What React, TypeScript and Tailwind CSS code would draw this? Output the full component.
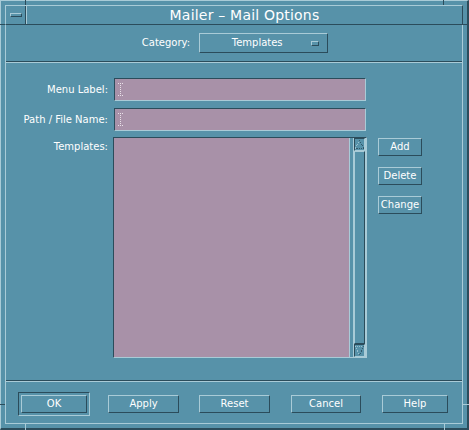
import React from 'react';

// Motif / CDE palette
// bg #5792a9, light #a9cbd7, dark #2b4c5b, field #a891a8
const raised =
  'border border-t-[#a9cbd7] border-l-[#a9cbd7] border-r-[#2b4c5b] border-b-[#2b4c5b]';
const sunken =
  'border border-t-[#2b4c5b] border-l-[#2b4c5b] border-r-[#a9cbd7] border-b-[#a9cbd7]';

function PushButton({ label, className = '' }: { label: string; className?: string }) {
  return (
    <div
      className={`${raised} h-[18px] flex items-center justify-center text-[10px] leading-none text-white ${className}`}
    >
      {label}
    </div>
  );
}

function IBeam() {
  return (
    <svg width="5" height="13" viewBox="0 0 5 13" className="shrink-0">
      <g fill="#e8e0e8">
        <rect x="0" y="0" width="1" height="1" />
        <rect x="2" y="0" width="1" height="1" />
        <rect x="4" y="0" width="1" height="1" />
        <rect x="2" y="2" width="1" height="1" />
        <rect x="2" y="4" width="1" height="1" />
        <rect x="2" y="6" width="1" height="1" />
        <rect x="2" y="8" width="1" height="1" />
        <rect x="2" y="10" width="1" height="1" />
        <rect x="0" y="12" width="1" height="1" />
        <rect x="2" y="12" width="1" height="1" />
        <rect x="4" y="12" width="1" height="1" />
      </g>
    </svg>
  );
}

function TextField() {
  return (
    <div className={`${sunken} w-[252px] h-[23px] bg-[#a891a8] flex items-center pl-[3px]`}>
      <IBeam />
    </div>
  );
}

function Arrow({ up }: { up: boolean }) {
  return (
    <div className={`${sunken} h-[13px] flex items-center justify-center`}>
      <svg width="11" height="11" viewBox="0 0 11 11" shapeRendering="crispEdges">
        {up ? (
          <>
            <path d="M5.5 0.5 L0.5 10.5" stroke="#a9cbd7" strokeDasharray="1.2 1" fill="none" />
            <path d="M5.5 0.5 L10.5 10.5 L0.5 10.5" stroke="#2b4c5b" strokeDasharray="1.2 1" fill="none" />
          </>
        ) : (
          <>
            <path d="M0.5 0.5 L10.5 0.5 M0.5 0.5 L5.5 10.5" stroke="#a9cbd7" strokeDasharray="1.2 1" fill="none" />
            <path d="M10.5 0.5 L5.5 10.5" stroke="#2b4c5b" strokeDasharray="1.2 1" fill="none" />
          </>
        )}
      </svg>
    </div>
  );
}

export default function App() {
  return (
    <div className="w-[469px] h-[430px] bg-[#5792a9] relative flex flex-col p-[4px] border-t border-l border-r-2 border-b-2 border-t-[#a9cbd7] border-l-[#a9cbd7] border-r-[#2b4c5b] border-b-[#2b4c5b] font-['DejaVu_Sans',sans-serif] text-white">
      {/* Resize handle ticks */}
      <div className="absolute left-[24px] top-[-1px] w-[1px] h-[5px] bg-[#2b4c5b]" />
      <div className="absolute left-[442px] top-[-1px] w-[1px] h-[5px] bg-[#2b4c5b]" />
      <div className="absolute left-[24px] bottom-[-2px] w-[1px] h-[6px] bg-[#a9cbd7]" />
      <div className="absolute left-[443px] bottom-[-2px] w-[1px] h-[6px] bg-[#a9cbd7]" />
      <div className="absolute left-[-1px] top-[23px] w-[5px] h-[1px] bg-[#2b4c5b]" />
      <div className="absolute right-[-2px] top-[23px] w-[6px] h-[1px] bg-[#2b4c5b]" />
      <div className="absolute left-[-1px] top-[403px] w-[5px] h-[1px] bg-[#2b4c5b]" />
      <div className="absolute right-[-2px] top-[403px] w-[6px] h-[1px] bg-[#a9cbd7]" />

      {/* Title bar */}
      <div className={`${raised} h-[20px] flex shrink-0`}>
        <div className="w-[20px] border-r border-r-[#2b4c5b] flex items-center justify-center">
          <div className={`${raised} w-[12px] h-[4px]`} />
        </div>
        <div className="flex-1 border-l border-l-[#a9cbd7] flex items-center justify-center text-[14px] leading-none tracking-[0.2px]">
          Mailer – Mail Options
        </div>
      </div>

      {/* Client area */}
      <div className="flex-1 flex flex-col border-l border-r border-b border-l-[#a9cbd7] border-r-[#a9cbd7] border-b-[#a9cbd7]">
        {/* Category */}
        <div className="h-[36px] shrink-0 flex items-start justify-center pt-[8px] pl-[2px] gap-[9px]">
          <span className="text-[10px] leading-[20px]">Category:</span>
          <div className={`${raised} w-[129px] h-[20px] flex items-center`}>
            <span className="flex-1 text-center text-[10px] leading-none pl-[3px]">Templates</span>
            <div className={`${raised} w-[8px] h-[5px] mr-[8px]`} />
          </div>
        </div>

        <div className="h-[2px] shrink-0 border-t border-b border-t-[#2b4c5b] border-b-[#a9cbd7]" />

        {/* Form */}
        <div className="flex-1 flex flex-col pt-[15px] text-[10px]">
          <div className="flex items-center">
            <span className="w-[102px] text-right">Menu Label:</span>
            <div className="ml-[6px]">
              <TextField />
            </div>
          </div>
          <div className="flex items-center mt-[7px]">
            <span className="w-[102px] text-right">Path / File Name:</span>
            <div className="ml-[6px]">
              <TextField />
            </div>
          </div>
          <div className="flex items-start mt-[6px]">
            <span className="w-[102px] text-right pt-[2px]">Templates:</span>
            <div className={`${sunken} ml-[5px] w-[254px] h-[221px] flex`}>
              <div className="flex-1 bg-[#a891a8] border-r border-r-[#a9cbd7]" />
              <div className="w-[16px] pl-[3px] bg-[#5792a9] flex flex-col">
                <div className="w-[13px] flex-1 flex flex-col border-l border-r border-l-[#a9cbd7] border-r-[#a9cbd7]">
                  <Arrow up />
                  <div className={`${raised} flex-1`} />
                  <Arrow up={false} />
                </div>
              </div>
            </div>
            <div className="ml-[11px] mt-[1px] flex flex-col gap-[11px]">
              <PushButton label="Add" className="w-[44px]" />
              <PushButton label="Delete" className="w-[44px]" />
              <PushButton label="Change" className="w-[44px]" />
            </div>
          </div>
        </div>

        <div className="h-[2px] shrink-0 border-t border-b border-t-[#2b4c5b] border-b-[#a9cbd7]" />

        {/* Action buttons */}
        <div className="h-[41px] shrink-0 flex items-start pt-[10px] pl-[12px]">
          <div className={`${sunken} w-[72px] h-[24px] p-[2px]`}>
            <PushButton label="OK" />
          </div>
          <PushButton label="Apply" className="w-[71px] ml-[18px] mt-[3px]" />
          <PushButton label="Reset" className="w-[71px] ml-[20px] mt-[3px]" />
          <PushButton label="Cancel" className="w-[70px] ml-[21px] mt-[3px]" />
          <PushButton label="Help" className="w-[66px] ml-[21px] mt-[3px]" />
        </div>
      </div>
    </div>
  );
}
